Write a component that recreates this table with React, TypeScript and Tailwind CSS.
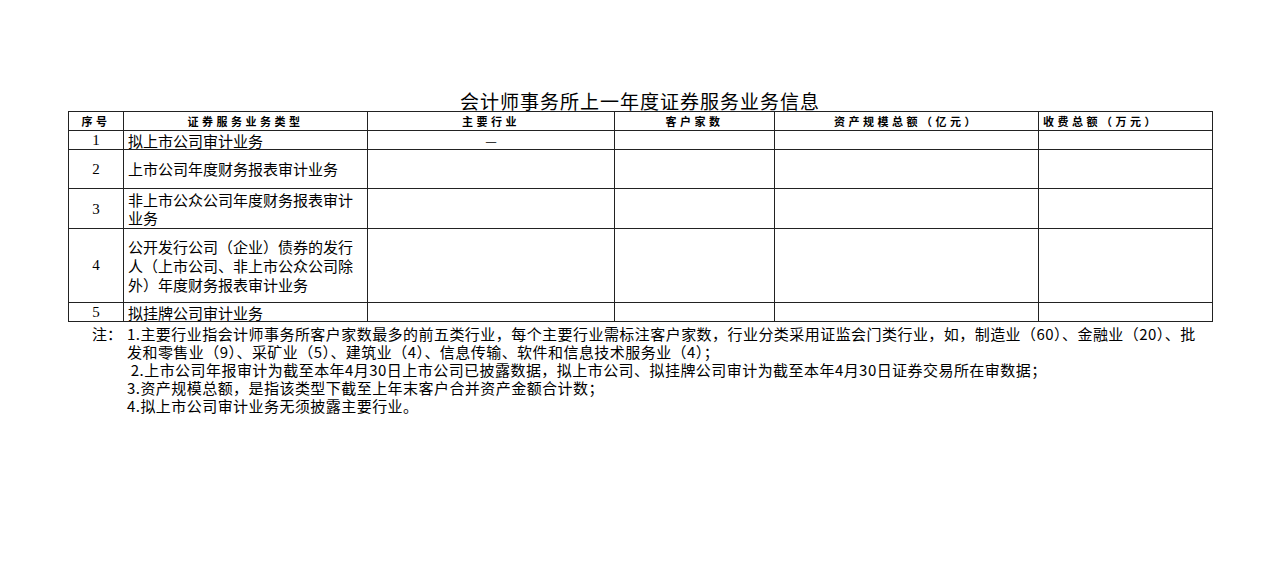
import React from "react";

const cjk = { fontFamily: '"Noto Sans CJK SC", "Noto Sans CJK JP", sans-serif' };
const serifNum = { fontFamily: '"Liberation Serif", "Noto Sans CJK SC", serif' };

const rows: { no: string; type: string[]; industry?: string; h: string; lh: string }[] = [
  { no: "1", type: ["拟上市公司审计业务"], industry: "—", h: "h-[19px]", lh: "leading-[17px]" },
  { no: "2", type: ["上市公司年度财务报表审计业务"], h: "h-[39px]", lh: "leading-[18px]" },
  { no: "3", type: ["非上市公众公司年度财务报表审计", "业务"], h: "h-[40px]", lh: "leading-[18px]" },
  {
    no: "4",
    type: ["公开发行公司（企业）债券的发行", "人（上市公司、非上市公众公司除", "外）年度财务报表审计业务"],
    h: "h-[74px]",
    lh: "leading-[19px]",
  },
  { no: "5", type: ["拟挂牌公司审计业务"], h: "h-[19px]", lh: "leading-[17px]" },
];

const headers = ["序号", "证券服务业务类型", "主要行业", "客户家数", "资产规模总额（亿元）", "收费总额（万元）"];

const notes = [
  "1.主要行业指会计师事务所客户家数最多的前五类行业，每个主要行业需标注客户家数，行业分类采用证监会门类行业，如，制造业（60）、金融业（20）、批",
  "发和零售业（9）、采矿业（5）、建筑业（4）、信息传输、软件和信息技术服务业（4）；",
  " 2.上市公司年报审计为截至本年4月30日上市公司已披露数据，拟上市公司、拟挂牌公司审计为截至本年4月30日证券交易所在审数据；",
  "3.资产规模总额，是指该类型下截至上年末客户合并资产金额合计数；",
  "4.拟上市公司审计业务无须披露主要行业。",
];

export default function App() {
  return (
    <div className="w-[1280px] h-[586px] bg-white text-black overflow-hidden" style={cjk}>
      <div className="pt-[91px] pl-[68px] w-[1212px]">
        <div className="h-[20px] text-center text-[19px] leading-[20px] tracking-[1px] whitespace-nowrap">
          会计师事务所上一年度证券服务业务信息
        </div>
        <table className="table-fixed border-collapse w-[1144px]">
          <colgroup>
            <col className="w-[55px]" />
            <col className="w-[244px]" />
            <col className="w-[247px]" />
            <col className="w-[160px]" />
            <col className="w-[264px]" />
            <col className="w-[174px]" />
          </colgroup>
          <thead>
            <tr className="h-[19px]">
              {headers.map((h, i) => (
                <th
                  key={h}
                  className={`border border-[#222] p-0 text-[11px] leading-[17px] font-bold tracking-[3.5px] whitespace-nowrap ${
                    i === 5 ? "text-left pl-[4px]" : "text-center"
                  }`}
                >
                  {h}
                </th>
              ))}
            </tr>
          </thead>
          <tbody>
            {rows.map((r) => (
              <tr key={r.no} className={r.h}>
                <td className={`border border-[#222] p-0 text-center text-[15px] ${r.lh}`} style={serifNum}>
                  {r.no}
                </td>
                <td className={`border border-[#222] p-0 pl-[4px] text-[15px] whitespace-nowrap ${r.lh}`}>
                  {r.type.map((t) => (
                    <div key={t}>{t}</div>
                  ))}
                </td>
                <td className="border border-[#222] p-0 text-center text-[13px] leading-[17px]">{r.industry ?? ""}</td>
                <td className="border border-[#222] p-0" />
                <td className="border border-[#222] p-0" />
                <td className="border border-[#222] p-0" />
              </tr>
            ))}
          </tbody>
        </table>
        <div className="flex pt-[3px] text-[15px] leading-[18px]">
          <div className="w-[59px] shrink-0 pl-[24px]">注：</div>
          <div className="flex flex-col tracking-[0.45px]">
            {notes.map((n) => (
              <div key={n} className="whitespace-pre">
                {n}
              </div>
            ))}
          </div>
        </div>
      </div>
    </div>
  );
}
